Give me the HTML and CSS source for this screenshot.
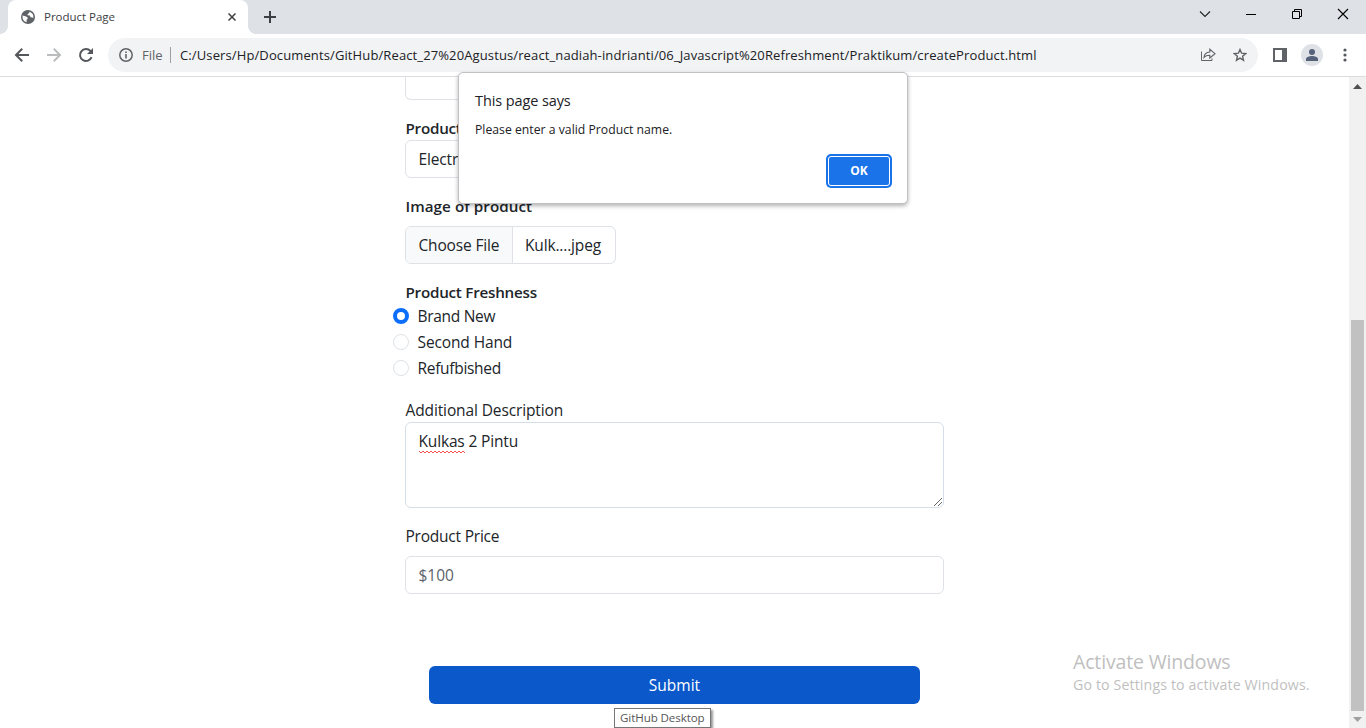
FILE: index.html
```html
<!DOCTYPE html>
<html lang="en">
<head>
<meta charset="utf-8">
<title>Product Page</title>
<link rel="stylesheet" href="styles.css">
</head>
<body>
<div class="browser">
  <header class="tabstrip">
    <div class="tab">
      <svg class="globe" width="14" height="14" viewBox="0 0 14 14"><circle cx="7" cy="7" r="7" fill="#5f6368"/><path d="M1.6 5.6L4.6 6.2L6.6 7.6V9L5.6 9.6V12.2C3.2 11.7 1.5 9.6 1.5 7ZM8.2 1.8L8.3 3L6.6 4V5.2L8.8 5.4L9.6 7.2L11.6 7.6L12.2 8.4C12.8 6 12.2 2.9 8.2 1.8Z" fill="#fff"/></svg>
      <span class="tab-title">Product Page</span>
      <svg class="tab-close" width="8" height="8" viewBox="0 0 8 8"><path d="M.5 .5L7.5 7.5M7.5 .5L.5 7.5" stroke="#3c4043" stroke-width="1.5"/></svg>
    </div>
    <svg class="new-tab" width="12" height="12" viewBox="0 0 12 12"><path d="M6 0V12M0 6H12" stroke="#3c4043" stroke-width="2"/></svg>
    <div class="window-controls">
      <svg width="12" height="12" viewBox="0 0 12 12"><path d="M1 3.5L6 8.5L11 3.5" fill="none" stroke="#222" stroke-width="1.1"/></svg>
      <svg width="12" height="12" viewBox="0 0 12 12"><path d="M1 6.5H11" stroke="#000"/></svg>
      <svg width="12" height="12" viewBox="0 0 12 12"><path d="M1.5 3.5H8.5V10.5H1.5ZM3.5 3.5V1.5H10.5V8.5H8.5" fill="none" stroke="#000"/></svg>
      <svg width="12" height="12" viewBox="0 0 12 12"><path d="M1 1L11 11M11 1L1 11" stroke="#000" stroke-width="1.1"/></svg>
    </div>
  </header>
  <div class="toolbar">
    <div class="nav">
      <svg width="16" height="16" viewBox="0 0 16 16"><path d="M15 8H2.5M8.2 1.8L2 8L8.2 14.2" fill="none" stroke="#54575b" stroke-width="2"/></svg>
      <svg width="16" height="16" viewBox="0 0 16 16"><path d="M1 8H13.5M7.8 1.8L14 8L7.8 14.2" fill="none" stroke="#babcbe" stroke-width="2"/></svg>
      <svg width="16" height="16" viewBox="0 0 16 16"><path d="M13.6 10.2A6 6 0 1 1 12.4 3.9L13.2 4.8" fill="none" stroke="#54575b" stroke-width="2"/><path d="M15 1V7H9Z" fill="#54575b"/></svg>
    </div>
    <div class="omnibox">
      <svg class="info" width="14" height="14" viewBox="0 0 14 14"><circle cx="7" cy="7" r="6.2" fill="none" stroke="#5f6368" stroke-width="1.5"/><path d="M7 6V10.5M7 3.4V5" stroke="#5f6368" stroke-width="1.6"/></svg>
      <span class="scheme">File</span>
      <span class="url">C:/Users/Hp/Documents/GitHub/React_27%20Agustus/react_nadiah-indrianti/06_Javascript%20Refreshment/Praktikum/createProduct.html</span>
      <svg class="share" width="16" height="14" viewBox="0 0 16 14"><path d="M1.5 3.5V12.5H12V10.5" fill="none" stroke="#5f6368"/><path d="M4 9.5C4.2 6.3 6.2 4.2 9.8 4V1.3L15 5.7L9.8 10V7.3C7.2 7.2 5.4 7.8 4 9.5Z" fill="none" stroke="#5f6368" stroke-width="1.1"/></svg>
      <svg class="star" width="14" height="14" viewBox="0 0 14 14"><path d="M7 1.5L8.6 5.2L12.7 5.6L9.6 8.3L10.5 12.2L7 10.1L3.5 12.2L4.4 8.3L1.3 5.6L5.4 5.2Z" fill="none" stroke="#5f6368" stroke-width="1.4"/></svg>
    </div>
    <svg class="panel" width="14" height="14" viewBox="0 0 14 14"><path d="M0 0H14V14H0ZM2 2V12H9V2Z" fill="#5f6368" fill-rule="evenodd"/></svg>
    <svg class="avatar" width="22" height="22" viewBox="0 0 22 22"><circle cx="11" cy="11" r="11" fill="#dee1e6"/><circle cx="11" cy="8" r="3" fill="#56617a"/><path d="M5 17V15C5 12.9 8.5 12 11 12S17 12.9 17 15V17Z" fill="#56617a"/></svg>
    <svg class="menu" width="4" height="14" viewBox="0 0 4 14"><g fill="#54575b"><circle cx="2" cy="2" r="1.6"/><circle cx="2" cy="7" r="1.6"/><circle cx="2" cy="12" r="1.6"/></g></svg>
  </div>
  <div class="viewport">
    <main class="page">
      <form class="form">
        <div class="control name-input"></div>
        <div class="label strong">Product</div>
        <div class="control select-box">Electro</div>
        <div class="label strong image-label spaced">Image of product</div>
        <div class="control file"><div class="file-button">Choose File</div><div class="file-name">Kulk....jpeg</div></div>
        <div class="label strong">Product Freshness</div>
        <div class="radio"><i class="dot checked"></i><span>Brand New</span></div>
        <div class="radio"><i class="dot"></i><span class="second-hand">Second Hand</span></div>
        <div class="radio"><i class="dot"></i><span>Refufbished</span></div>
        <div class="label description-label">Additional Description</div>
        <div class="control textarea"><span class="misspelt">Kulkas<svg class="squiggle" width="46" height="4" viewBox="0 0 46 4"><path d="M0 1L2 3L4 1L6 3L8 1L10 3L12 1L14 3L16 1L18 3L20 1L22 3L24 1L26 3L28 1L30 3L32 1L34 3L36 1L38 3L40 1L42 3L44 1L46 3" fill="none" stroke="#f05050"/></svg></span> 2 Pintu
          <svg class="grip" width="9" height="9" viewBox="0 0 9 9"><path d="M1 9L9 1M5 9L9 5" stroke="#555" stroke-width=".9"/></svg></div>
        <div class="label price-label spaced">Product Price</div>
        <div class="control price">$100</div>
        <div class="submit">Submit</div>
      </form>
    </main>
    <aside class="scrollbar">
      <svg width="9" height="5" viewBox="0 0 9 5"><path d="M0 5L4.5 0L9 5Z" fill="#505050"/></svg>
      <div class="thumb"></div>
      <svg width="9" height="5" viewBox="0 0 9 5"><path d="M0 0L4.5 5L9 0Z" fill="#a0a0a0"/></svg>
    </aside>
  </div>
  <div class="dialog">
    <div class="dialog-title">This page says</div>
    <div class="dialog-text">Please enter a valid Product name.</div>
    <div class="ok">OK</div>
  </div>
  <div class="tooltip">GitHub Desktop</div>
  <div class="watermark">
    <div class="wm-title">Activate Windows</div>
    <div class="wm-text">Go to Settings to activate Windows.</div>
  </div>
</div>
</body>
</html>
```
FILE: styles.css
```css
* { box-sizing: border-box; }
body { margin: 0; overflow: hidden; font: 15.5px/24px "Open Sans", "Noto Sans", sans-serif; color: #212529; background: #fff; white-space: nowrap; }
svg { display: block; flex: none; }
.browser { position: relative; width: 1366px; height: 728px; display: flex; flex-direction: column; overflow: hidden; }
.tabstrip { height: 34px; flex: none; display: flex; align-items: center; background: #dee1e6; padding-left: 8px; }
.tab { position: relative; width: 240px; height: 34px; display: flex; align-items: center; padding: 0 12px 0 13px; background: #fff; border-radius: 8px 8px 0 0; }
.tab::before, .tab::after { content: ""; position: absolute; bottom: 0; width: 8px; height: 8px; }
.tab::before { left: -8px; background: radial-gradient(circle at 0 0, transparent 7.5px, #fff 8.2px); }
.tab::after { right: -8px; background: radial-gradient(circle at 100% 0, transparent 7.5px, #fff 8.2px); }
.tab-title { margin-left: 9px; flex: none; font-size: 11.5px; color: #3c4043; letter-spacing: -.02px; }
.tab-close { margin-left: auto; }
.new-tab { margin-left: 16px; }
.window-controls { margin-left: auto; display: flex; gap: 34px; padding-right: 17px; margin-top: -6px; }
.toolbar { height: 43px; flex: none; display: flex; align-items: center; border-bottom: 1px solid #dadce0; background: #fff; padding-left: 14px; }
.nav { display: flex; gap: 16px; }
.omnibox { margin-left: 14px; width: 1150px; height: 34px; border-radius: 17px; background: #f1f3f4; display: flex; align-items: center; padding: 0 11px; font-size: 13px; }
.scheme { margin-left: 9px; width: 21px; color: #5f6368; flex: none; }
.url { position: relative; margin-left: 17px; color: #202124; letter-spacing: .118px; }
.url::before { content: ""; position: absolute; left: -10px; top: 4px; width: 1px; height: 16px; background: #9aa0a6; }
.share { margin-left: auto; }
.star { margin-left: 17px; }
.panel { margin-left: 15px; }
.avatar { margin-left: 14px; }
.menu { margin-left: 20px; }
.viewport { flex: 1; display: flex; min-height: 0; }
.page { flex: 1; display: flex; overflow: hidden; }
.form { margin-left: 405px; width: 539px; display: flex; flex-direction: column; }
.control { flex: none; height: 38px; border: 1px solid #dee2e6; border-radius: 6px; padding: 6px 12.5px; background: #fff; letter-spacing: -.16px; }
.label { height: 24px; flex: none; padding-left: .5px; }
.strong { font-weight: 600; font-size: 15.2px; letter-spacing: -.24px; }
.image-label { letter-spacing: .06px; }
.name-input { width: 211px; height: 23px; border-top: 0; border-radius: 0 0 6px 6px; margin-bottom: 16px; }
.select-box { width: 211px; margin-bottom: 16px; }
.spaced { margin-bottom: 8px; }
.file { width: 211px; padding: 0; display: flex; overflow: hidden; margin-bottom: 16px; }
.file-button { width: 107px; padding: 6px 12px 0 12.5px; background: #f8f9fa; border-right: 1px solid #dee2e6; }
.file-name { padding: 6px 12px; }
.radio { height: 24px; flex: none; margin: 0 0 2px -12px; display: flex; align-items: center; gap: 8.5px; letter-spacing: -.3px; }
.second-hand { letter-spacing: -.12px; }
.dot { width: 16px; height: 16px; border: 1px solid #dee2e6; border-radius: 50%; background: #fff; }
.checked { border: 4px solid #0d6efd; }
.description-label { margin-top: 16px; letter-spacing: -.12px; }
.price-label { letter-spacing: -.22px; }
.textarea { position: relative; height: 86px; border-color: #d5dfe9; margin-bottom: 16px; }
.misspelt { position: relative; }
.squiggle { position: absolute; left: 0; bottom: -2px; }
.grip { position: absolute; right: 1px; bottom: 1px; }
.price { color: #5c636a; letter-spacing: 0; }
.submit { flex: none; height: 38px; margin: 72px 24px 0; border-radius: 6px; background: #0a58ca; color: #fff; text-align: center; padding-top: 7px; }
.scrollbar { width: 17px; flex: none; background: #f1f1f1; display: flex; flex-direction: column; align-items: center; padding: 7px 0 6px; }
.thumb { width: 13px; height: 391px; margin: auto 0 6px; background: #c1c1c1; }
.dialog { position: absolute; left: 458px; top: 72px; width: 450px; height: 132px; background: #fff; border: 1px solid #bfc1c4; border-radius: 5px; box-shadow: 0 2px 4px rgba(0,0,0,.3); padding: 16px 17px 0 16px; color: #202124; display: flex; flex-direction: column; }
.dialog-title { font-size: 14.5px; letter-spacing: -.1px; }
.dialog-text { font-size: 12.2px; letter-spacing: .02px; margin-top: 5px; }
.ok { width: 62px; height: 30px; margin: 14px 0 0 auto; background: #1a73e8; border: 1px solid #fff; border-radius: 3px; box-shadow: 0 0 0 2px #1a73e8; color: #fff; font-size: 12px; font-weight: 700; text-align: center; line-height: 28px; }
.tooltip { position: absolute; left: 614px; top: 708px; width: 97px; height: 20px; border: 1px solid #767676; background: #fff; color: #575757; font-size: 11.6px; letter-spacing: -.1px; line-height: 18px; padding-left: 5px; box-shadow: 2px 2px 2px rgba(0,0,0,.4); }
.watermark { position: absolute; left: 1073px; top: 650px; color: #bfbfbf; }
.wm-title { font-size: 19.5px; letter-spacing: -.16px; }
.wm-text { font-size: 14.2px; letter-spacing: .12px; line-height: 22px; }
```
